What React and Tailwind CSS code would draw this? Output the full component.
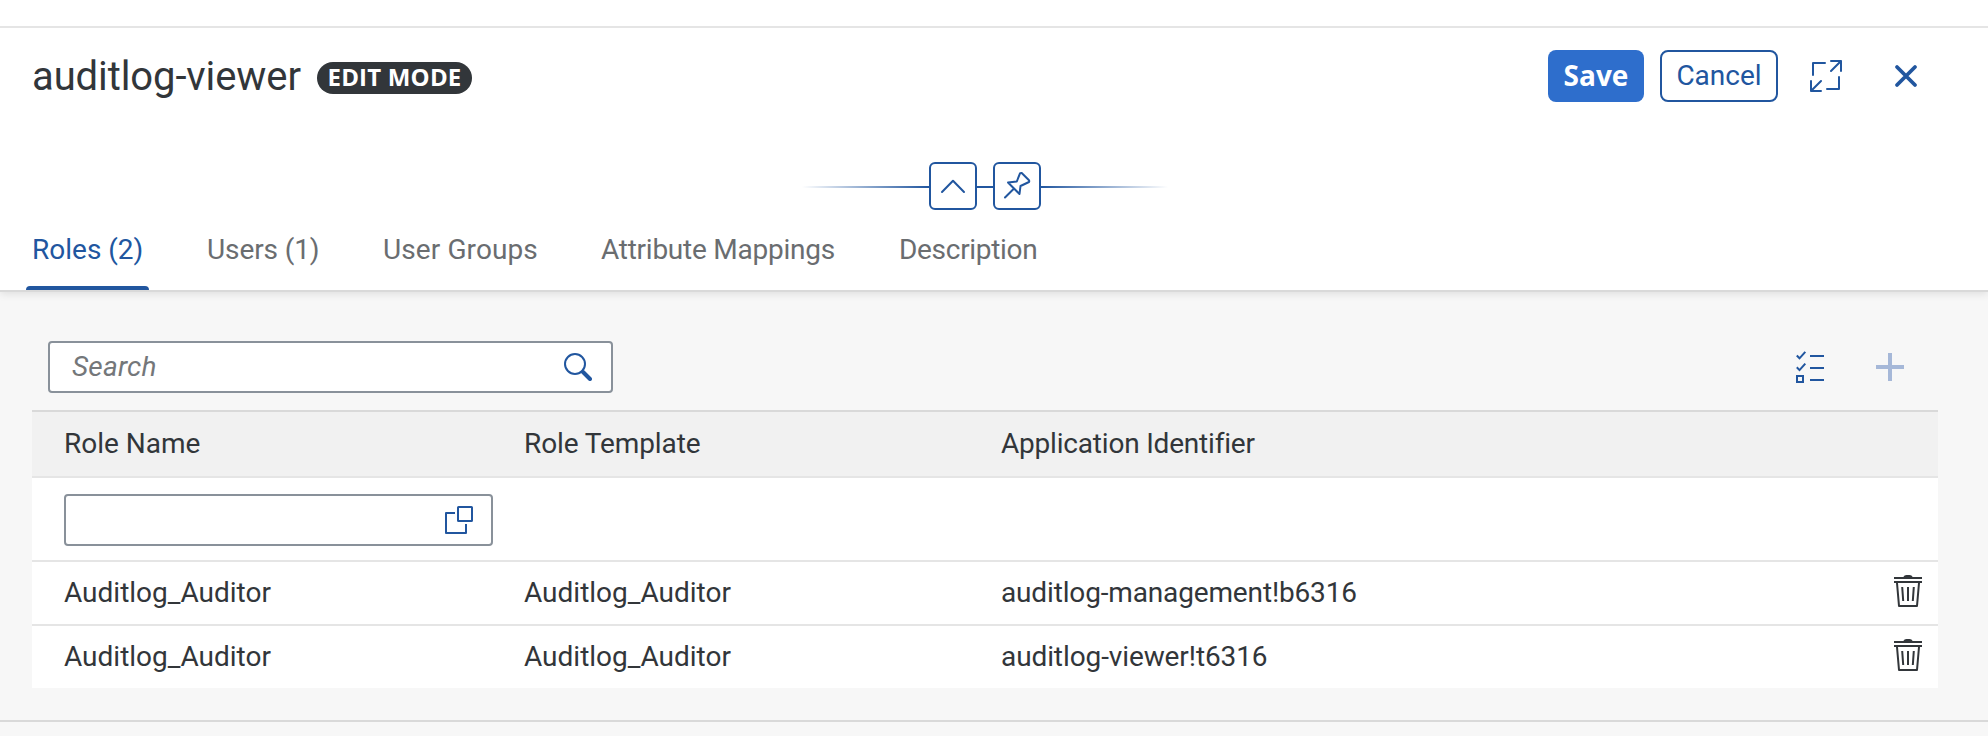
const rows = [
  { name: 'Auditlog_Auditor', template: 'Auditlog_Auditor', app: 'auditlog-management!b6316', tracking: 'tracking-[-0.15px]' },
  { name: 'Auditlog_Auditor', template: 'Auditlog_Auditor', app: 'auditlog-viewer!t6316', tracking: 'tracking-[-0.1px]' },
];

const tabs = [
  { label: 'Roles (2)', active: true, width: 'w-[123px]', tracking: 'tracking-[0px]' },
  { label: 'Users (1)', width: 'w-[124px]', tracking: 'tracking-[-0.1px]' },
  { label: 'User Groups', width: 'w-[166px]', tracking: 'tracking-[0.1px]' },
  { label: 'Attribute Mappings', width: 'w-[246px]', tracking: 'tracking-[-0.25px]' },
  { label: 'Description', width: 'w-[160px]', tracking: 'tracking-[-0.3px]' },
];

const columns = 'grid grid-cols-[460px_477px_1fr_28px] pl-8 pr-4';

function ExpandIcon() {
  return (
    <svg width="32" height="32" viewBox="0 0 32 32" fill="none" stroke="currentColor" strokeWidth="2" strokeLinecap="round" strokeLinejoin="round">
      <path d="M3 15V3h12M29 17v12H17" />
      <path d="M21 1h10v10M31 1 21 11M1 21v10h10M1 31l10-10" />
    </svg>
  );
}

function CloseIcon() {
  return (
    <svg width="32" height="32" viewBox="0 0 32 32" fill="none" stroke="currentColor" strokeWidth="3.8" strokeLinecap="round">
      <path d="m7 7 18 18M25 7 7 25" />
    </svg>
  );
}

function ChevronIcon() {
  return (
    <svg width="44" height="44" viewBox="2 2 44 44" fill="none" stroke="currentColor" strokeWidth="2" strokeLinecap="round" strokeLinejoin="round">
      <path d="M13 30 24 18.8 35 30" />
    </svg>
  );
}

function PinIcon() {
  return (
    <svg width="44" height="44" viewBox="2 2 44 44" fill="none" stroke="currentColor" strokeWidth="2" strokeLinejoin="round" strokeLinecap="round">
      <path d="M12 35.500 20.800 26.700M15 20.500 26.500 32 27.500 24 36 20Q36.500 19 36 18.300L28.700 11Q27.800 10.700 27 11.300L23.800 19.500Z" />
    </svg>
  );
}

function SearchIcon() {
  return (
    <svg width="28" height="28" viewBox="0 0 28 28" fill="none" stroke="currentColor" strokeLinecap="round">
      <circle cx="11" cy="11" r="10" strokeWidth="2" />
      <path d="m19 19 7 7" strokeWidth="4" />
    </svg>
  );
}

function ValueHelpIcon() {
  return (
    <svg width="28" height="28" viewBox="0 0 28 28" fill="none" stroke="currentColor" strokeWidth="2" strokeLinejoin="round">
      <rect x="13" y="1" width="14" height="14" rx="0.5" />
      <path d="M10 7H1v20h20v-9" />
    </svg>
  );
}

function ListIcon() {
  return (
    <svg width="28" height="32" viewBox="0 0 28 32" fill="none" stroke="currentColor" strokeWidth="2">
      <path d="m.8 4.500 2.700 2.800L9.300.8M.8 16.300l2.700 2.800 5.800-6.500M1 25h6v6H1zM14 5h14M14 17h14M14 29h14" />
    </svg>
  );
}

function AddIcon() {
  return (
    <svg width="28" height="28" viewBox="0 0 28 28" fill="none" stroke="currentColor" strokeWidth="4">
      <path d="M14 0v28M0 14h28" />
    </svg>
  );
}

function TrashIcon() {
  return (
    <svg width="28" height="32" viewBox="0 0 28 32" fill="none" stroke="currentColor" strokeWidth="2" strokeLinejoin="round">
      <path d="M9 2.500C10 .8 11 0 12.500 0h3C17 0 18 .8 19 2.500Z" fill="currentColor" stroke="none" />
      <path d="M0 3h28M0 7h28M3 8l2 23h18l2-23" />
      <path d="m8.200 12 1 14M14 12v14M19.800 12l-1 14" />
    </svg>
  );
}

export default function App() {
  return (
    <div className="flex h-[736px] w-[1988px] flex-col overflow-hidden bg-[#f7f7f7] font-['Roboto',sans-serif] text-[28px] leading-9 text-[#32363a]">
      <header className="relative border-b-2 border-[#d9d9d9] bg-white pt-[26px] shadow-[0_2px_8px_rgba(0,0,0,0.1)]">
        <div className="flex h-[136px] items-start justify-between border-t-2 border-[#e5e5e5] pl-8 pr-[66px] pt-[22px]">
          <div className="flex h-[52px] items-center">
            <h1 className="w-[285px] whitespace-nowrap pt-0.5 text-[40px] leading-[52px] tracking-[-0.1px]">auditlog-viewer</h1>
            <span className="mt-1 flex h-8 w-[155px] items-center justify-center rounded-full bg-[#32363a] pb-0.5 font-['Open_Sans',sans-serif] text-[24px] font-bold leading-[30px] tracking-[0.2px] text-white">EDIT MODE</span>
          </div>
          <div className="flex items-center">
            <button className="h-[52px] w-24 rounded-lg bg-[#2e6ecc] pb-[3px] font-['Open_Sans',sans-serif] font-bold text-white">Save</button>
            <button className="ml-4 h-[52px] w-[118px] rounded-lg border-2 border-[#21569f] text-[#21569f]">Cancel</button>
            <button className="ml-8 text-[#21569f]"><ExpandIcon /></button>
            <button className="ml-12 text-[#21569f]"><CloseIcon /></button>
          </div>
        </div>
        <div className="flex items-center justify-center pr-[18px] text-[#21569f]">
          <div className="mt-0.5 h-0.5 w-[127px] bg-gradient-to-r from-transparent to-[#21569f]" />
          <button className="size-12 rounded-md border-2 border-current"><ChevronIcon /></button>
          <div className="mt-0.5 h-0.5 w-4 bg-[#21569f]" />
          <button className="size-12 rounded-md border-2 border-current"><PinIcon /></button>
          <div className="mt-0.5 h-0.5 w-[127px] bg-gradient-to-l from-transparent to-[#21569f]" />
        </div>
        <nav className="flex h-20 gap-[52px] pl-[26px]">
          {tabs.map((tab) => (
            <div key={tab.label} className={`flex flex-col whitespace-nowrap pt-[22px] ${tab.width} ${tab.tracking} ${tab.active ? 'justify-between text-[#21569f]' : 'text-[#6a6d70]'}`}>
              <span className="pl-1.5">{tab.label}</span>
              {tab.active && <div className="h-1 rounded-t bg-[#21569f]" />}
            </div>
          ))}
        </nav>
      </header>

      <main className="h-[430px] shrink-0 border-b-2 border-[#d9d9d9] pl-8 pr-[50px] pt-[49px]">
        <div className="flex h-[69px] items-start justify-between pl-4 pr-[34px]">
          <div className="flex h-[52px] w-[565px] items-center justify-between rounded border-2 border-[#89919a] bg-white pl-[22px] pr-[19px]">
            <span className="italic tracking-[0.2px] text-[#74777a]">Search</span>
            <span className="text-[#21569f]"><SearchIcon /></span>
          </div>
          <div className="flex h-[52px] items-center gap-[52px]">
            <span className="text-[#21569f]"><ListIcon /></span>
            <span className="text-[#a6b8d8]"><AddIcon /></span>
          </div>
        </div>

        <div className="border-t-2 border-[#d9d9d9] bg-white">
          <div className={`${columns} h-[66px] items-center border-b-2 border-[#e5e5e5] bg-[#f1f1f1]`}>
            <span>Role Name</span>
            <span className="tracking-[-0.1px]">Role Template</span>
            <span className="tracking-[-0.2px]">Application Identifier</span>
          </div>
          <div className="flex h-[84px] items-center border-b-2 border-[#e5e5e5] pl-8 pt-0.5">
            <div className="flex h-[52px] w-[429px] items-center justify-end rounded border-2 border-[#89919a] bg-white pr-[18px] text-[#21569f]">
              <ValueHelpIcon />
            </div>
          </div>
          {rows.map((row, i) => (
            <div key={row.app} className={`${columns} items-center ${i === 0 ? 'h-16 border-b-2 border-[#e5e5e5]' : 'h-[62px]'}`}>
              <span>{row.name}</span>
              <span>{row.template}</span>
              <span className={row.tracking}>{row.app}</span>
              <span className="flex pb-1"><TrashIcon /></span>
            </div>
          ))}
        </div>
      </main>
    </div>
  );
}
